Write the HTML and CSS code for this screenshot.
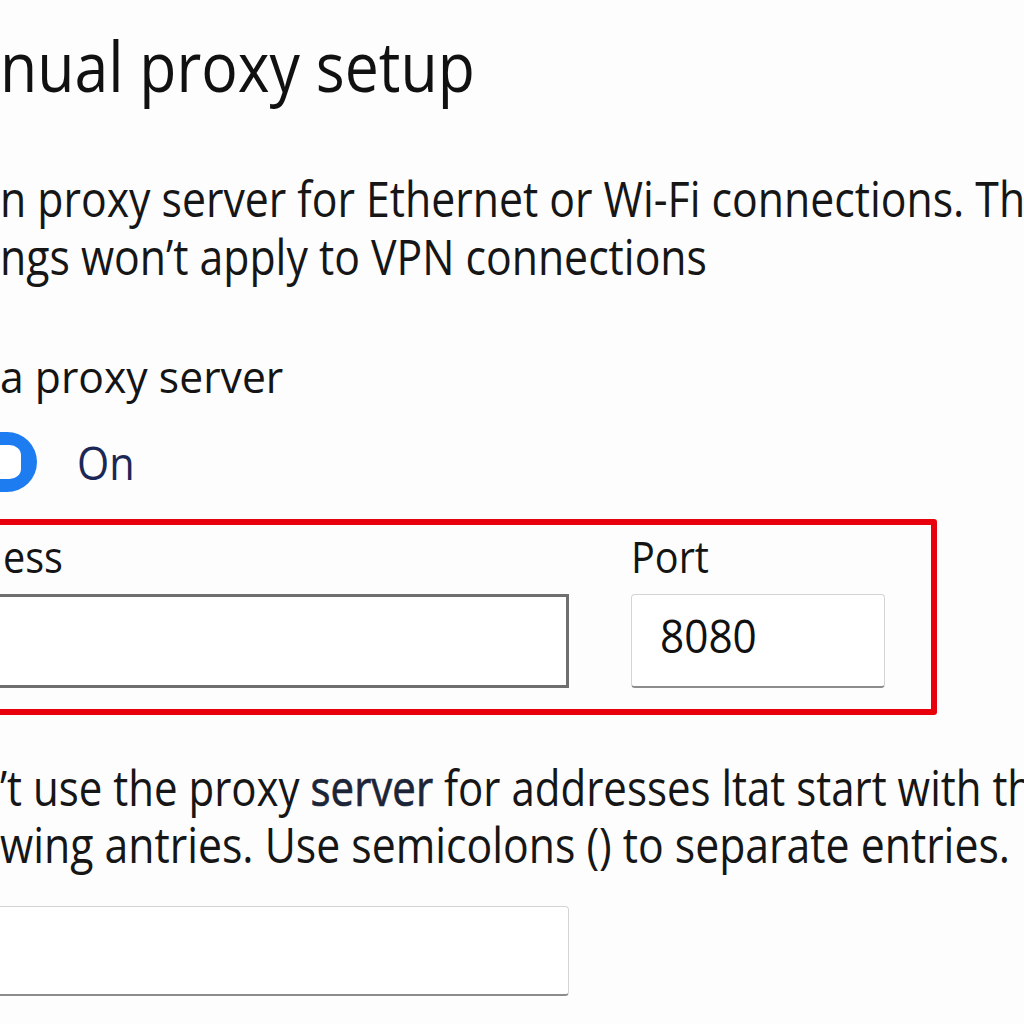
FILE: index.html
```html
<!DOCTYPE html>
<html lang="en">

<head>
    <meta charset="UTF-8">
    <meta name="viewport" content="width=device-width, initial-scale=1.0">
    <title>Manual proxy setup</title>
    <link rel="stylesheet" href="styles.css">
</head>

<body>
    <main class="page">
        <h1 class="title"><span class="squeeze">nual proxy setup</span></h1>

        <p class="desc">
            <span class="squeeze">n proxy server for Ethernet or Wi-Fi connections. These</span>
            <span class="squeeze">ngs won’t apply to VPN connections</span>
        </p>

        <div class="toggle-group">
            <div class="toggle-label"><span class="squeeze">a proxy server</span></div>
            <div class="toggle-row">
                <span class="switch"><span class="knob"></span></span>
                <span class="state"><span class="squeeze">On</span></span>
            </div>
        </div>

        <!-- highlighted address / port fields -->
        <div class="proxy-box">
            <div class="field field-address">
                <label class="field-label"><span class="squeeze">ess</span></label>
                <div class="input input-strong"></div>
            </div>
            <div class="field field-port">
                <label class="field-label"><span class="squeeze">Port</span></label>
                <div class="input input-soft"><span class="squeeze">8080</span></div>
            </div>
        </div>

        <p class="desc exceptions">
            <span class="squeeze tight">’t use the proxy <b class="strong-word">server</b> for addresses ltat start with the</span>
            <span class="squeeze">wing antries. Use semicolons () to separate entries.</span>
        </p>

        <div class="input input-soft input-wide"></div>
    </main>
</body>

</html>
```

FILE: styles.css
```css
/* Reset and base styles */
* {
    margin: 0;
    padding: 0;
    box-sizing: border-box;
}

html,
body {
    width: 1024px;
    height: 1024px;
    overflow: hidden;
}

body {
    background-color: #fdfdfd;
    color: #141414;
    font-family: 'Open Sans', 'Noto Sans', sans-serif;
}

.page {
    display: flex;
    flex-direction: column;
}

/* text is narrower than the font, squeeze it */
.squeeze {
    display: block;
    white-space: nowrap;
    transform-origin: 0 0;
}

/* Title */
.title {
    margin-top: 25px;
    font-size: 69px;
    font-weight: 400;
    line-height: 80px;
    color: #111;
}

.title .squeeze {
    transform: scaleX(0.88);
}

/* Descriptions */
.desc {
    margin-top: 64px;
    font-size: 50px;
    line-height: 58px;
    color: #161616;
}

.desc .squeeze {
    transform: scaleX(0.855);
}

.desc .squeeze.tight {
    transform: scaleX(0.84);
}

/* Toggle */
.toggle-group {
    margin-top: 65px;
}

.toggle-label {
    font-size: 44px;
    line-height: 52px;
}

.toggle-label .squeeze {
    transform: scaleX(0.97);
}

.toggle-row {
    display: flex;
    align-items: center;
    gap: 40px;
    margin-top: 30px;
    margin-left: -53px;
}

.switch {
    display: flex;
    align-items: center;
    justify-content: flex-end;
    width: 90px;
    height: 60px;
    padding-right: 16px;
    border-radius: 30px;
    background-color: #1c7cf0;
}

.knob {
    width: 38px;
    height: 34px;
    border-radius: 30%;
    background-color: #fff;
}

.state {
    font-size: 46px;
    line-height: 52px;
    color: #1b2857;
}

.state .squeeze {
    transform: scaleX(0.9);
}

/* Proxy box */
.proxy-box {
    display: flex;
    gap: 62px;
    width: 967px;
    margin-top: 27px;
    margin-left: -30px;
    padding: 5px 46px 21px 14px;
    border: 6px solid #e8000c;
    border-radius: 3px;
}

.field {
    display: flex;
    flex-direction: column;
    gap: 12px;
}

.field-address {
    width: 579px;
}

.field-address .field-label {
    padding-left: 13px;
}

.field-port {
    width: 254px;
}

.field-label {
    font-size: 44px;
    line-height: 52px;
    color: #141414;
}

.field-label .squeeze {
    transform: scaleX(0.9);
}

.input {
    height: 94px;
    background-color: #fff;
}

.input-strong {
    border: 3px solid #6f6f6f;
}

.input-soft {
    border: 1px solid #d4d4d4;
    border-bottom: 2px solid #8c8c8c;
    border-radius: 4px;
    padding: 14px 0 0 28px;
    font-size: 46px;
    line-height: 52px;
    color: #111;
}

.input-soft .squeeze {
    transform: scaleX(0.92);
}

/* Exceptions */
.exceptions {
    margin-top: 44px;
    line-height: 57px;
}

.strong-word {
    font-weight: 400;
    color: #1c2538;
    -webkit-text-stroke: 0.7px #1c2538;
}

.input-wide {
    width: 600px;
    height: 90px;
    margin-top: 33px;
    margin-left: -31px;
}
```
